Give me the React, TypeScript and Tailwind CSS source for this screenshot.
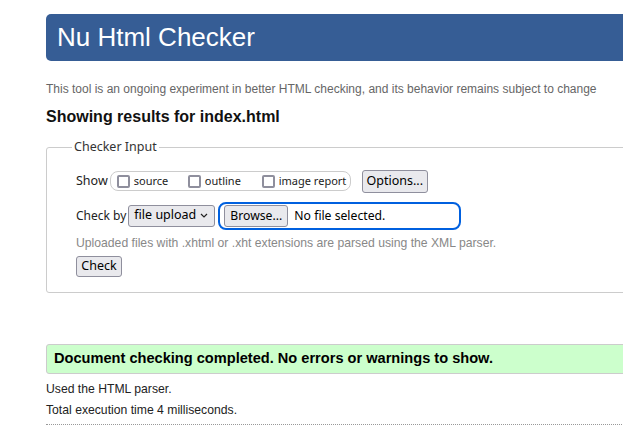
export default function App() {
  const ui = { fontFamily: '"Noto Sans", "Open Sans", sans-serif' };
  return (
    <div className="w-[623px] h-[436px] overflow-hidden bg-white" style={{ fontFamily: '"Liberation Sans", Arial, sans-serif' }}>
      <div className="ml-[46px] w-[640px] pt-[14px]">
        {/* header */}
        <div className="h-[47px] bg-[#365d95] rounded-[5px] pl-[11px] flex items-center">
          <h1 className="text-[26px] leading-none text-white -mt-[2px]">Nu Html Checker</h1>
        </div>

        <p className="mt-[20px] text-[12px] leading-[16px] text-[#666] whitespace-nowrap">
          This tool is an ongoing experiment in better HTML checking, and its behavior remains subject to change
        </p>
        <h2 className="mt-[11px] text-[16px] leading-[18px] font-bold text-[#111]">Showing results for index.html</h2>

        {/* checker input */}
        <fieldset className="mt-[12px] border border-[#ccc] rounded-[3px] pl-[29px] pr-4 pt-[13px] h-[155px]">
          <legend className="-ml-[4px] px-[2px] text-[12.5px] text-[#333]" style={ui}>Checker Input</legend>
          <div className="flex items-center text-[12.5px] text-[#222]" style={ui}>
            <span>Show</span>
            <div className="ml-[2px] h-[20px] w-[241px] border border-[#ccc] rounded-[8px] flex items-center pl-[6px] text-[11px] text-[#222] whitespace-nowrap">
              <span className="w-[13px] h-[13px] border-2 border-[#8f8f9d] rounded-[2px] bg-white shrink-0" />
              <span className="ml-[4px] w-[54px]">source</span>
              <span className="w-[13px] h-[13px] border-2 border-[#8f8f9d] rounded-[2px] bg-white shrink-0" />
              <span className="ml-[4px] w-[57px]">outline</span>
              <span className="w-[13px] h-[13px] border-2 border-[#8f8f9d] rounded-[2px] bg-white shrink-0" />
              <span className="ml-[4px]">image report</span>
            </div>
            <button className="ml-[11px] h-[23px] w-[66px] border border-[#8f8f9d] rounded-[3px] bg-[#e9e9ed] text-[12.5px] text-black">
              Options...
            </button>
          </div>

          <div className="mt-[9px] flex items-center text-[12px] text-[#222]" style={ui}>
            <span>Check by</span>
            <div className="ml-[2px] h-[22px] w-[87px] border border-[#8f8f9d] rounded-[3px] bg-[#e9e9ed] flex items-center pl-[5px] text-black text-[12.5px]">
              <span>file upload</span>
              <svg className="ml-auto mr-[6px]" width="8" height="5" viewBox="0 0 8 5" fill="none">
                <path d="M1 1l3 3 3-3" stroke="#222" strokeWidth="1.2" />
              </svg>
            </div>
            <div className="ml-[3px] h-[28px] w-[243px] border-2 border-[#0060df] rounded-[8px] flex items-center pl-[4px] text-black text-[12.2px]">
              <button className="h-[22px] w-[64px] border border-[#8f8f9d] rounded-[3px] bg-[#e9e9ed]">Browse...</button>
              <span className="ml-[6px]">No file selected.</span>
            </div>
          </div>

          <p className="mt-[5px] text-[12.2px] leading-[16px] text-[#888] whitespace-nowrap">
            Uploaded files with .xhtml or .xht extensions are parsed using the XML parser.
          </p>
          <button className="mt-[5px] h-[21px] w-[46px] border border-[#8f8f9d] rounded-[3px] bg-[#e9e9ed] text-[12.5px] text-black" style={ui}>
            Check
          </button>
        </fieldset>

        {/* result */}
        <div className="mt-[51px] h-[30px] bg-[#ccffcc] border border-[#ccc] rounded-[3px] pl-[7px] flex items-center">
          <p className="text-[14.6px] font-bold text-black whitespace-nowrap">Document checking completed. No errors or warnings to show.</p>
        </div>
        <p className="mt-[8px] text-[12.2px] leading-[14px] text-[#222]">Used the HTML parser.</p>
        <p className="mt-[7px] text-[12.2px] leading-[14px] text-[#222]">Total execution time 4 milliseconds.</p>
        <div className="mt-[7px] border-t border-dotted border-[#999]" />
      </div>
    </div>
  );
}
